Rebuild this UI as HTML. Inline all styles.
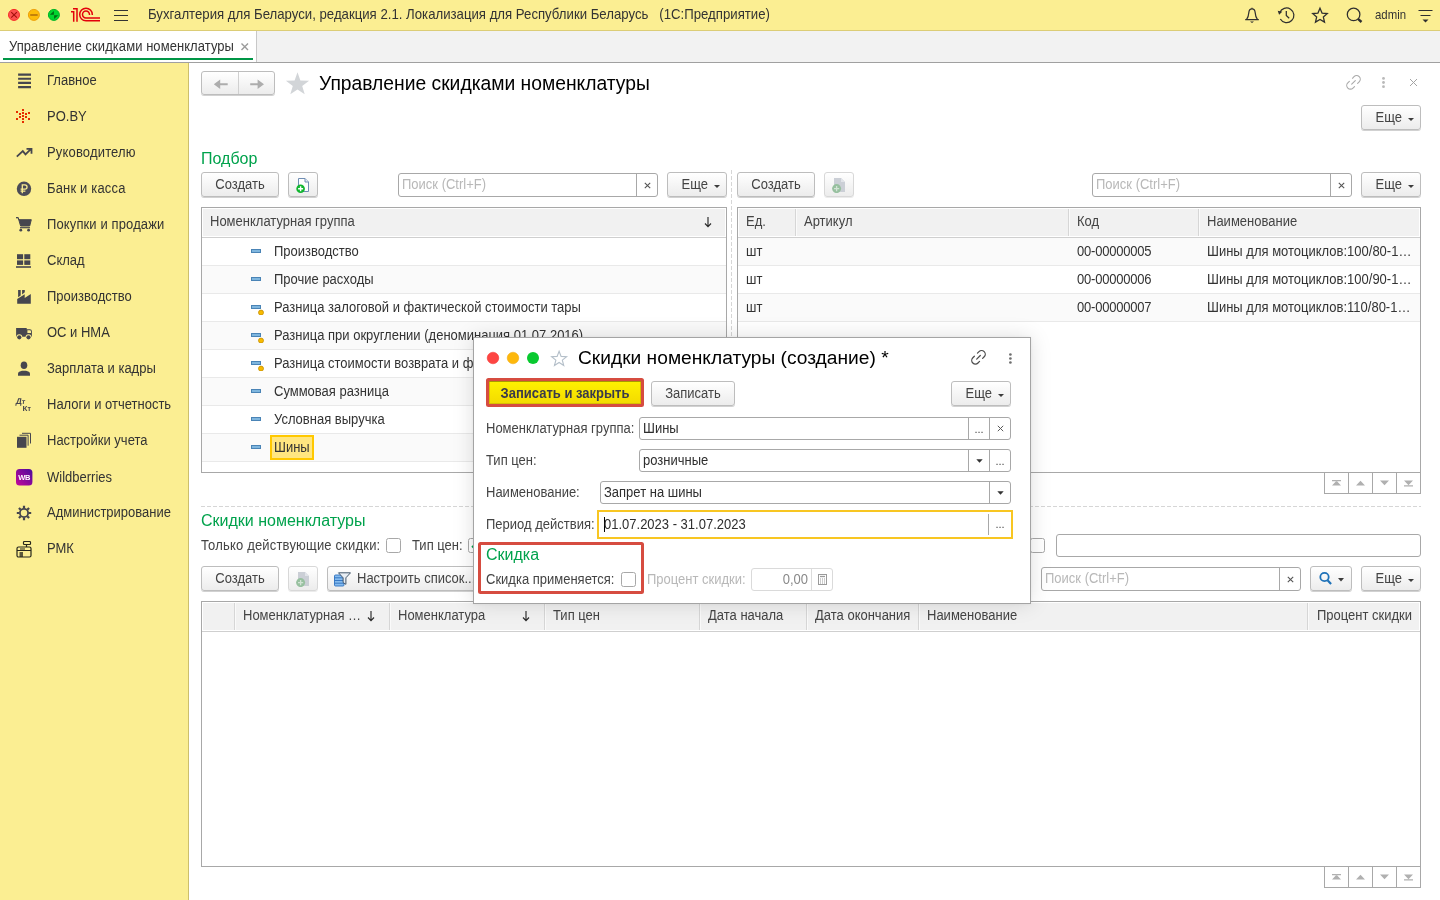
<!DOCTYPE html>
<html lang="ru">
<head>
<meta charset="utf-8">
<title>1C</title>
<style>
*{box-sizing:border-box;margin:0;padding:0}
html,body{width:1440px;height:900px;overflow:hidden;background:#fff}
body{font-family:"Liberation Sans",sans-serif;font-size:13px;color:#333;position:relative;will-change:transform}
.abs{position:absolute}
#topbar{left:0;top:0;width:1440px;height:31px;background:#fbee92;border-bottom:1px solid #dccd76}
#tabbar{left:0;top:31px;width:1440px;height:32px;background:#f2f2f2;border-bottom:1px solid #a0a0a0}
#tab{left:0;top:31px;width:257px;height:31px;background:#fff;border-right:1px solid #c8c8c8}
#tabline{left:3px;top:58px;width:250px;height:2px;background:#009646}
#side{left:0;top:63px;width:189px;height:837px;background:#fbee92;border-right:1px solid #cdbf6c}
.t{position:absolute;white-space:nowrap;line-height:16px}
.nav{margin-top:1px;position:absolute;left:47px;font-size:14px;color:#333;white-space:nowrap;line-height:16px}
.btn{position:absolute;height:26px;border:1px solid #bdbdbd;border-radius:3px;background:linear-gradient(#ffffff,#ececec);box-shadow:0 1px 0 rgba(0,0,0,.18);font-size:14px;color:#444;text-align:center;line-height:23px;white-space:nowrap}
.inp{position:absolute;height:24px;border:1px solid #a8a8a8;border-radius:3px;background:#fff}
.ph{color:#b8b8b8;font-size:14px;position:absolute;left:3px;top:3px;line-height:16px}
.grn{color:#00a24c;font-size:16px}
.tbl{position:absolute;border:1px solid #a8a8a8;background:#fff}
.th{position:absolute;top:0;height:30px;background:#f1f1f1;border-bottom:1px solid #cfcfcf;box-shadow:inset 1px 1px 0 #fff,inset -1px -1px 0 #fff}
.row{position:absolute;left:0;right:0;height:28px;border-bottom:1px solid #e9e9e9}
.row.alt{background:#fafafa}
.c{position:absolute;font-size:14px;line-height:16px;white-space:nowrap;color:#333}

.btn{height:25px}
.btn .car{display:inline-block;width:0;height:0;border-left:3.500px solid transparent;border-right:3.500px solid transparent;border-top:4px solid #444;margin-left:6px;vertical-align:middle;position:relative;top:0px}
.sb{position:absolute;top:0;bottom:0;border-left:1px solid #a8a8a8}
.hd{position:absolute;top:1px;height:27px;border-left:1px solid #d6d6d6;box-shadow:inset 1px 0 0 #fafafa}
.hd span{position:absolute;left:8px;top:5px;font-size:13px;line-height:16px;color:#444;white-space:nowrap}
.scr{position:absolute;width:97px;height:21px;border:1px solid #a8a8a8;border-top:none;background:#fff}
.lbl{margin-top:1px;position:absolute;font-size:13px;line-height:16px;color:#444;white-space:nowrap}
.chk{position:absolute;width:15px;height:15px;border:1px solid #a8a8a8;border-radius:2.500px;background:#fff}

#dlg{position:absolute;left:473px;top:337px;width:558px;height:267px;background:#fff;border:1px solid #a4a4a4;box-shadow:0 0 20px rgba(0,0,0,.13),0 0 3px rgba(0,0,0,.06)}
#dlg .inp{height:23px}
#dlg .val{position:absolute;left:3px;top:3px;font-size:13px;line-height:16px;color:#2e2e2e;white-space:nowrap}
.dots{position:absolute;left:0;right:0;top:3px;text-align:center;font-size:11px;line-height:16px;color:#444;letter-spacing:0}
.more{width:60px;font-size:13px}
.more span{position:absolute;left:13.500px;top:0}
.more i{position:absolute;left:46px;top:12px;width:0;height:0;border-left:3px solid transparent;border-right:3px solid transparent;border-top:3.500px solid #3c3c3c}
.lbl,.c,.hd span,.nav,.val,.ph,.s,.more span{transform:scaleY(1.075)}
.s{display:inline-block}
</style>
</head>
<body>
<div id="topbar" class="abs"></div>
<div id="tabbar" class="abs"></div>
<div id="tab" class="abs"></div>
<div id="tabline" class="abs"></div>
<div id="side" class="abs"></div>

<!-- traffic lights -->
<svg class="abs" style="left:0;top:0" width="140" height="31" viewBox="0 0 140 31">
 <circle cx="14" cy="14.900" r="5.500" fill="#fc514f" stroke="#f62a27" stroke-width="1"/>
 <path d="M11.200 12.100l5.700 5.600M16.900 12.100l-5.700 5.600" stroke="#a30f0d" stroke-width="1.150" fill="none"/>
 <circle cx="33.900" cy="14.900" r="5.500" fill="#fdbc09" stroke="#eea00a" stroke-width="1"/>
 <path d="M30.200 15h7.500" stroke="#b4720a" stroke-width="1.600" fill="none"/>
 <circle cx="53.900" cy="14.900" r="5.500" fill="#00d52f" stroke="#00b426" stroke-width="1"/>
 <path d="M49.800 14.700l4.100-3.800v3.800zM54.100 15.200h4.100l-4.100 3.800z" fill="#006c12"/>
 <!-- 1C logo -->
 <g fill="none" stroke="#e3000b" stroke-width="1.5">
  <path d="M71 11.8h2.700v10M73 8.700h4v13.100"/>
  <path d="M100 20.800H86a6.300 6.300 0 1 1 6.300-6.300v.6"/>
  <path d="M100 18H86a3.500 3.500 0 1 1 3.500-3.500v.5"/>
 </g>
 <!-- hamburger -->
 <path d="M114 10.5h14M114 15.5h14M114 20.5h14" stroke="#333" stroke-width="1.2"/>
</svg>
<div class="t s" style="left:148px;top:7px;font-size:13.2px;color:#333">Бухгалтерия для Беларуси, редакция 2.1. Локализация для Республики Беларусь &nbsp;&nbsp;(1С:Предприятие)</div>
<!-- right icons -->
<svg class="abs" style="left:1236px;top:0" width="204" height="31" viewBox="0 0 204 31" fill="none" stroke="#2f2f2f" stroke-width="1.250">
 <path d="M9.200 19.600h13.600M10.600 19.400c1.800-2 2-4 2.200-6.600.2-2.300 1.300-3.900 3.200-3.900s3 1.600 3.200 3.900c.2 2.600.4 4.600 2.200 6.600M16 8.900v-1.100"/>
 <path d="M14 21.400h4l-2 1.700z" fill="#2f2f2f" stroke="none"/>
 <path d="M43.700 12.900A7.300 7.300 0 1 1 44.300 19"/>
 <path d="M41.700 10.800l4.600.9-3.200 3.100z" fill="#2f2f2f" stroke="none"/>
 <path d="M50.300 10.900v4.600l2.900 2.700"/>
 <path d="M84.00 8.20L86.06 13.07L91.32 13.52L87.33 16.98L88.53 22.13L84.00 19.40L79.47 22.13L80.67 16.98L76.68 13.52L81.94 13.07z" stroke-linejoin="miter"/>
 <circle cx="117.600" cy="14.400" r="6.300"/>
 <path d="M122 18.900l3.500 3.100" stroke-width="2.400"/>
 <path d="M182.500 10.500h14M184.500 15.500h10" stroke-width="1.200"/>
 <path d="M186.500 19.500h6l-3 3z" fill="#2f2f2f" stroke="none"/>
</svg>
<div class="t s" style="left:1375px;top:7px;font-size:11.400px;color:#333">admin</div>
<!-- tab -->
<div class="t s" style="left:9px;top:39px;font-size:13px;color:#333;letter-spacing:.06px">Управление скидками номенклатуры</div>
<svg class="abs" style="left:240px;top:42px" width="10" height="10" viewBox="0 0 10 10"><path d="M1.500 1.500l6.500 6.500M8 1.500l-6.500 6.500" stroke="#9a9a9a" stroke-width="1.400" fill="none"/></svg>

<svg class="abs" style="left:15px;top:71px" width="18" height="18" viewBox="0 0 18 18"><path d="M3.100 3.600h12.900M3.100 7.800h12.900M3.100 11.900h12.900M3.100 16.100h12.900" stroke="#46464e" stroke-width="2.100"/></svg>
<div class="nav" style="top:72px;font-size:13px">Главное</div>
<svg class="abs" style="left:15px;top:107px" width="18" height="18" viewBox="0 0 18 18"><g fill="#e62c00"><rect x="7" y="2" width="2" height="2"/><rect x="7" y="5" width="2" height="2"/><rect x="7" y="8" width="2" height="2"/><rect x="7" y="11" width="2" height="2"/><rect x="7" y="14" width="2" height="2"/><rect x="4" y="6" width="2" height="2"/><rect x="4" y="9" width="2" height="2"/><rect x="10" y="6" width="2" height="2"/><rect x="10" y="9" width="2" height="2"/><rect x="1" y="4" width="2" height="2"/><rect x="1" y="11" width="2" height="2"/><rect x="13" y="5" width="2" height="2"/><rect x="13" y="11" width="2" height="2"/></g></svg>
<div class="nav" style="top:108px;font-size:13px">PO.BY</div>
<svg class="abs" style="left:15px;top:143px" width="18" height="18" viewBox="0 0 18 18"><path d="M1.800 13.600l6-5.500 2.700 3.300 5.300-5.300M11.500 5.800h5v5" fill="none" stroke="#46464e" stroke-width="1.800"/></svg>
<div class="nav" style="top:144px;font-size:13px;letter-spacing:0.17px">Руководителю</div>
<svg class="abs" style="left:15px;top:179px" width="18" height="18" viewBox="0 0 18 18"><circle cx="9" cy="9.800" r="7.200" fill="#4b4b56"/><path d="M7.300 14.300V5.800h2.600a2.100 2.100 0 0 1 0 4.300H5.600M5.600 12.200h4.800" fill="none" stroke="#fbee92" stroke-width="1.300"/></svg>
<div class="nav" style="top:180px;font-size:13px;letter-spacing:0.17px">Банк и касса</div>
<svg class="abs" style="left:15px;top:215px" width="18" height="18" viewBox="0 0 18 18"><path d="M1 2.700h2.200l.7 2h12.400l-1.600 6.300H5.600L3.200 2.700z" fill="#46464e" stroke="#46464e" stroke-width="1" stroke-linejoin="round"/><path d="M5 12.700h10" stroke="#46464e" stroke-width="1.200"/><circle cx="5.800" cy="15.200" r="1.400" fill="#46464e"/><circle cx="13.600" cy="15.200" r="1.400" fill="#46464e"/></svg>
<div class="nav" style="top:216px;font-size:13px;letter-spacing:0.12px">Покупки и продажи</div>
<svg class="abs" style="left:15px;top:251px" width="18" height="18" viewBox="0 0 18 18"><g fill="#46464e"><rect x="2" y="3.200" width="6.100" height="5"/><rect x="9.300" y="3.200" width="6" height="5"/><rect x="2" y="9.400" width="6.100" height="4.500"/><rect x="9.300" y="9.400" width="6" height="4.500"/><rect x="1" y="15.200" width="15" height="1.600"/></g></svg>
<div class="nav" style="top:252px;font-size:13px">Склад</div>
<svg class="abs" style="left:15px;top:287px" width="18" height="18" viewBox="0 0 18 18"><path d="M2.200 16.800V12L9.700 7.300V11L15.800 7V16.800z" fill="#46464e"/><path d="M3.100 3.100H5.700V8.500L3.100 10.200zM7.100 3.100H9.800V5.300L7.100 7.500z" fill="#46464e"/></svg>
<div class="nav" style="top:288px;font-size:13px">Производство</div>
<svg class="abs" style="left:15px;top:323px" width="18" height="18" viewBox="0 0 18 18"><path d="M1.100 5.100h10.600v8.600H1.100zM11.700 6.300h3.200a2 2 0 0 1 2 2v5.400h-5.200z" fill="#46464e"/><path d="M12.400 7.300h2.400a1.200 1.200 0 0 1 1.200 1.200V10h-3.600z" fill="#fbee92"/><circle cx="4.300" cy="14.300" r="3" fill="#fbee92"/><circle cx="13.500" cy="14.300" r="3" fill="#fbee92"/><circle cx="4.300" cy="14.300" r="2.100" fill="#46464e"/><circle cx="13.500" cy="14.300" r="2.100" fill="#46464e"/></svg>
<div class="nav" style="top:324px;font-size:13px">ОС и НМА</div>
<svg class="abs" style="left:15px;top:359px" width="18" height="18" viewBox="0 0 18 18"><ellipse cx="9" cy="6.300" rx="3.300" ry="3.800" fill="#46464e"/><path d="M3 16.700v-2.200c0-1.500 2-2.300 4-2.700h4c2 .4 4 1.200 4 2.700v2.200z" fill="#46464e"/></svg>
<div class="nav" style="top:360px;font-size:13px">Зарплата и кадры</div>
<svg class="abs" style="left:15px;top:395px" width="18" height="18" viewBox="0 0 18 18"><text x="1.800" y="8.800" font-family="Liberation Sans" font-weight="bold" font-size="8.500" fill="#46464e" transform="skewX(-8)" >Д<tspan font-size="7">т</tspan></text><text x="7.600" y="16.200" font-family="Liberation Sans" font-weight="bold" font-size="8" fill="#46464e">К<tspan font-size="7">т</tspan></text></svg>
<div class="nav" style="top:396px;font-size:13px">Налоги и отчетность</div>
<svg class="abs" style="left:15px;top:431px" width="18" height="18" viewBox="0 0 18 18"><rect x="2" y="5.800" width="9.500" height="11" fill="#46464e"/><path d="M4.500 4.200h8.600v10.500M7 2.300h8.500v10.200" fill="none" stroke="#46464e" stroke-width="1"/></svg>
<div class="nav" style="top:432px;font-size:13px">Настройки учета</div>
<svg class="abs" style="left:15px;top:468px" width="18" height="18" viewBox="0 0 18 18"><defs><linearGradient id="wb" x1="0" y1="1" x2="1" y2="0"><stop offset="0" stop-color="#c4089a"/><stop offset="1" stop-color="#4b0a9c"/></linearGradient></defs><rect x="1" y="1" width="16.400" height="16.400" rx="3.500" fill="url(#wb)"/><text x="9.200" y="12" text-anchor="middle" font-family="Liberation Sans" font-weight="bold" font-size="7.500" fill="#fff" letter-spacing="-0.3">WB</text></svg>
<div class="nav" style="top:469px;font-size:13px">Wildberries</div>
<svg class="abs" style="left:15px;top:504px" width="18" height="18" viewBox="0 0 18 18"><circle cx="9" cy="9" r="4.100" fill="none" stroke="#46464e" stroke-width="1.800"/><path d="M13.60 9.00L16.20 9.00M12.25 12.25L14.09 14.09M9.00 13.60L9.00 16.20M5.75 12.25L3.91 14.09M4.40 9.00L1.80 9.00M5.75 5.75L3.91 3.91M9.00 4.40L9.00 1.80M12.25 5.75L14.09 3.91" stroke="#46464e" stroke-width="2.200"/></svg>
<div class="nav" style="top:504px;font-size:13px">Администрирование</div>
<svg class="abs" style="left:15px;top:540px" width="18" height="18" viewBox="0 0 18 18"><g fill="none" stroke="#26261c" stroke-width="1.200" stroke-linejoin="round"><rect x="2" y="7" width="14" height="10" rx="1.500"/><rect x="8.500" y="1.500" width="7" height="3" rx=".8"/><path d="M11.500 4.500v2.500M2 10.500h14M5 9h5"/></g><path d="M4.500 12h3.500v5h-3.500z" fill="#26261c" opacity=".75"/></svg>
<div class="nav" style="top:540px;font-size:13px">РМК</div>
<div class="btn" style="left:201px;top:71px;width:74px;height:24px"><svg width="74" height="24" viewBox="0 0 74 24" style="position:absolute;left:-1px;top:-1px"><path d="M37.500 1v22" stroke="#d0d0d0"/><g stroke="#adadad" stroke-width="2" fill="none"><path d="M18 13.200h8.700M49.200 13.200h8"/></g><path d="M12.800 13.200l6.400-4.700v9.400zM63 13.200l-6.400-4.700v9.400z" fill="#adadad"/></svg></div>
<svg class="abs" style="left:285px;top:71px" width="25" height="25" viewBox="0 0 25 25"><path d="M12.500 1.300l2.900 8.200 8.700.2-6.900 5.300 2.500 8.300-7.200-4.900-7.200 4.900 2.500-8.300L.9 9.700l8.700-.2z" fill="#d2d5d8"/></svg>
<div class="t" style="left:319px;top:72px;font-size:19.300px;line-height:24px;color:#000">Управление скидками номенклатуры</div>
<svg class="abs" style="left:1340px;top:70px" width="90" height="26" viewBox="0 0 90 26"><g transform="translate(13.5 12.4) rotate(-45) scale(0.73) translate(-12 -12)" fill="none" stroke="#aaaaaa" stroke-width="1.51" stroke-linecap="round"><path d="M15 7h3a5 5 0 0 1 0 10h-3m-6 0H6a5 5 0 0 1 0-10h3M8.500 12h7"/></g><g fill="#b9b9b9"><circle cx="43.500" cy="8.400" r="1.400"/><circle cx="43.500" cy="12.500" r="1.400"/><circle cx="43.500" cy="16.700" r="1.400"/></g><path d="M70 9l7 7M77 9l-7 7" stroke="#a4a4a4" stroke-width="1"/></svg>
<div class="btn more" style="left:1361px;top:105px"><span>Еще</span><i></i></div>
<div class="t grn" style="left:201px;top:149px;line-height:20px">Подбор</div>
<div class="btn" style="left:201px;top:172px;width:78px;font-size:13px"><span class="s">Создать</span></div>
<div class="btn" style="left:288px;top:172px;width:30px"><svg width="16" height="16" viewBox="0 0 16 16" style="position:absolute;left:6px;top:4px"><path d="M3.500 1.500h6.500l3.500 3.500v9.500h-10z" fill="#fdfdfe" stroke="#6f8db3" stroke-width="1"/><path d="M10 1.500v3.500h3.500" fill="#e4ebf3" stroke="#6f8db3" stroke-width="1"/><circle cx="5.600" cy="11.700" r="4.300" fill="#0fb52e"/><path d="M5.600 9.200v5M3.100 11.700h5" stroke="#fff" stroke-width="1.400"/></svg></div>
<div class="inp" style="left:398px;top:173px;width:260px"><div class="ph" style="font-size:13px">Поиск (Ctrl+F)</div><div class="sb" style="right:0;width:21px"><svg width="9" height="9" viewBox="0 0 9 9" style="position:absolute;left:5.500px;top:7px"><path d="M1.800 1.800l5.400 5.400M7.200 1.800l-5.400 5.400" stroke="#555" stroke-width="1.100" fill="none"/></svg></div></div>
<div class="btn more" style="left:667px;top:172px"><span>Еще</span><i></i></div>
<div class="abs" style="left:731px;top:170px;width:1px;height:325px;background:repeating-linear-gradient(180deg,#d6d6d6 0 4px,transparent 4px 6px)"></div>
<div class="btn" style="left:737px;top:172px;width:78px;font-size:13px"><span class="s">Создать</span></div>
<div class="btn" style="left:824px;top:172px;width:30px;border-color:#d8d8d8;box-shadow:0 1px 0 rgba(0,0,0,.08)"><svg width="16" height="16" viewBox="0 0 16 16" style="position:absolute;left:6px;top:4px"><path d="M3 1h7l4 4v10h-11z" fill="#cbcfd6"/><path d="M10 1v4h4z" fill="#e1e4e9"/><circle cx="5.600" cy="11.600" r="4.500" fill="#97c09f"/><path d="M5.600 9v5.200M3 11.600h5.200" stroke="#d2e3d5" stroke-width="1.300"/></svg></div>
<div class="inp" style="left:1092px;top:173px;width:260px"><div class="ph" style="font-size:13px">Поиск (Ctrl+F)</div><div class="sb" style="right:0;width:21px"><svg width="9" height="9" viewBox="0 0 9 9" style="position:absolute;left:5.500px;top:7px"><path d="M1.800 1.800l5.400 5.400M7.200 1.800l-5.400 5.400" stroke="#555" stroke-width="1.100" fill="none"/></svg></div></div>
<div class="btn more" style="left:1361px;top:172px"><span>Еще</span><i></i></div>
<div class="tbl" style="left:201px;top:207px;width:526px;height:266px;overflow:hidden"><div class="th" style="left:0;right:0"><span class="c" style="left:8px;top:6px;font-size:13px;color:#444">Номенклатурная группа</span><svg width="8" height="11" viewBox="0 0 8 11" style="position:absolute;left:502px;top:9px"><path d="M4 0v9.500M1 6.500l3 3.200 3-3.200" fill="none" stroke="#2a2a2a" stroke-width="1.150"/></svg></div><div class="row" style="top:30px"><svg width="14" height="12" viewBox="0 0 14 12" style="position:absolute;left:48px;top:9px"><rect x="1.500" y="2.500" width="9" height="3" fill="#7fb6de" stroke="#4a84b6" stroke-width="1"/></svg><span class="c" style="left:72px;top:6px;font-size:13px">Производство</span></div><div class="row alt" style="top:58px"><svg width="14" height="12" viewBox="0 0 14 12" style="position:absolute;left:48px;top:9px"><rect x="1.500" y="2.500" width="9" height="3" fill="#7fb6de" stroke="#4a84b6" stroke-width="1"/></svg><span class="c" style="left:72px;top:6px;font-size:13px">Прочие расходы</span></div><div class="row" style="top:86px"><svg width="14" height="12" viewBox="0 0 14 12" style="position:absolute;left:48px;top:9px"><rect x="1.500" y="2.500" width="9" height="3" fill="#7fb6de" stroke="#4a84b6" stroke-width="1"/><circle cx="11" cy="9.600" r="2.500" fill="#f7ba00" stroke="#c48d00" stroke-width=".8"/></svg><span class="c" style="left:72px;top:6px;font-size:13px">Разница залоговой и фактической стоимости тары</span></div><div class="row alt" style="top:114px"><svg width="14" height="12" viewBox="0 0 14 12" style="position:absolute;left:48px;top:9px"><rect x="1.500" y="2.500" width="9" height="3" fill="#7fb6de" stroke="#4a84b6" stroke-width="1"/><circle cx="11" cy="9.600" r="2.500" fill="#f7ba00" stroke="#c48d00" stroke-width=".8"/></svg><span class="c" style="left:72px;top:6px;font-size:13px">Разница при округлении (деноминация 01.07.2016)</span></div><div class="row" style="top:142px"><svg width="14" height="12" viewBox="0 0 14 12" style="position:absolute;left:48px;top:9px"><rect x="1.500" y="2.500" width="9" height="3" fill="#7fb6de" stroke="#4a84b6" stroke-width="1"/><circle cx="11" cy="9.600" r="2.500" fill="#f7ba00" stroke="#c48d00" stroke-width=".8"/></svg><span class="c" style="left:72px;top:6px;font-size:13px">Разница стоимости возврата и фактической стоимости товаров</span></div><div class="row alt" style="top:170px"><svg width="14" height="12" viewBox="0 0 14 12" style="position:absolute;left:48px;top:9px"><rect x="1.500" y="2.500" width="9" height="3" fill="#7fb6de" stroke="#4a84b6" stroke-width="1"/></svg><span class="c" style="left:72px;top:6px;font-size:13px">Суммовая разница</span></div><div class="row" style="top:198px"><svg width="14" height="12" viewBox="0 0 14 12" style="position:absolute;left:48px;top:9px"><rect x="1.500" y="2.500" width="9" height="3" fill="#7fb6de" stroke="#4a84b6" stroke-width="1"/></svg><span class="c" style="left:72px;top:6px;font-size:13px">Условная выручка</span></div><div class="row alt" style="top:226px"><div style="position:absolute;left:68px;top:1px;width:44px;height:25px;background:#ffe680;border:2px solid #ffc800"></div><svg width="14" height="12" viewBox="0 0 14 12" style="position:absolute;left:48px;top:9px"><rect x="1.500" y="2.500" width="9" height="3" fill="#7fb6de" stroke="#4a84b6" stroke-width="1"/></svg><span class="c" style="left:72px;top:6px;font-size:13px">Шины</span></div></div>
<div class="tbl" style="left:737px;top:207px;width:684px;height:266px;overflow:hidden"><div class="th" style="left:0;right:0"><div class="hd" style="left:0px;width:57px;border-left:none;box-shadow:none;"><span>Ед.</span></div><div class="hd" style="left:57px;width:273px;"><span>Артикул</span></div><div class="hd" style="left:330px;width:130px;"><span>Код</span></div><div class="hd" style="left:460px;width:224px;"><span>Наименование</span></div></div><div class="row alt" style="top:30px"><span class="c" style="left:8px;top:6px;font-size:13px">шт</span><span class="c" style="left:339px;top:6px;font-size:13px;letter-spacing:-.22px">00-00000005</span><span class="c" style="left:469px;top:6px;font-size:13px">Шины для мотоциклов:100/80-1…</span></div><div class="row" style="top:58px"><span class="c" style="left:8px;top:6px;font-size:13px">шт</span><span class="c" style="left:339px;top:6px;font-size:13px;letter-spacing:-.22px">00-00000006</span><span class="c" style="left:469px;top:6px;font-size:13px">Шины для мотоциклов:100/90-1…</span></div><div class="row alt" style="top:86px"><span class="c" style="left:8px;top:6px;font-size:13px">шт</span><span class="c" style="left:339px;top:6px;font-size:13px;letter-spacing:-.22px">00-00000007</span><span class="c" style="left:469px;top:6px;font-size:13px">Шины для мотоциклов:110/80-1…</span></div></div>
<div class="scr" style="left:1324px;top:473px"><svg width="97" height="21" viewBox="0 0 97 21" style="position:absolute;left:-1px;top:-1px"><path d="M24.500 0v21M48.500 0v21M72.500 0v21" stroke="#a8a8a8" stroke-width="1"/><g fill="#b0b0b0"><path d="M8 8h9v1.200H8zM8 13.500h9L12.500 8.800z"/><path d="M32 13.500h9L36.500 8.800z"/><path d="M56 8.500h9L60.500 13.200z"/><path d="M80 8.500h9L84.500 13.200zM80 13.300h9v1.200H80z"/></g></svg></div>
<div class="abs" style="left:201px;top:506px;width:1220px;height:1px;background:repeating-linear-gradient(90deg,#d6d6d6 0 4px,transparent 4px 6px)"></div>
<div class="t grn" style="left:201px;top:511px;line-height:20px">Скидки номенклатуры</div>
<div class="lbl" style="left:201px;top:537px;letter-spacing:.18px">Только действующие скидки:</div>
<div class="chk" style="left:386px;top:538px"></div>
<div class="lbl" style="left:412px;top:537px">Тип цен:</div>
<div class="chk" style="left:468px;top:538px"><svg width="10" height="10" viewBox="0 0 10 10" style="position:absolute;left:1.500px;top:2px"><path d="M1 5l3 3 5-6.500" fill="none" stroke="#00a24c" stroke-width="1.800"/></svg></div>
<div class="chk" style="left:1030px;top:538px"></div>
<div class="inp" style="left:1056px;top:534px;width:365px;height:23px"></div>
<div class="btn" style="left:201px;top:566px;width:78px;font-size:13px"><span class="s">Создать</span></div>
<div class="btn" style="left:288px;top:566px;width:30px;border-color:#d8d8d8;box-shadow:0 1px 0 rgba(0,0,0,.08)"><svg width="16" height="16" viewBox="0 0 16 16" style="position:absolute;left:6px;top:4px"><path d="M3 1h7l4 4v10h-11z" fill="#cbcfd6"/><path d="M10 1v4h4z" fill="#e1e4e9"/><circle cx="5.600" cy="11.600" r="4.500" fill="#97c09f"/><path d="M5.600 9v5.200M3 11.600h5.200" stroke="#d2e3d5" stroke-width="1.300"/></svg></div>
<div class="btn" style="left:327px;top:566px;width:170px;font-size:13px;text-align:left;padding-left:29px"><svg width="17" height="15" viewBox="0 0 17 15" style="position:absolute;left:6px;top:5px"><rect x=".5" y="3" width="9.500" height="11" rx="1" fill="#86bbee" stroke="#2e72bf" stroke-width=".9"/><path d="M.5 5.800h9.500M.5 8.500h9.500M.5 11.200h9.500" stroke="#2e72bf" stroke-width=".9"/><path d="M4.500 .8h12l-4.600 5v6.500l-2.800-1.800V5.800z" fill="#e8eef4" stroke="#44586c" stroke-width="1" stroke-linejoin="round"/></svg><span class="s">Настроить список...</span></div>
<div class="inp" style="left:1041px;top:567px;width:260px"><div class="ph" style="font-size:13px">Поиск (Ctrl+F)</div><div class="sb" style="right:0;width:21px"><svg width="9" height="9" viewBox="0 0 9 9" style="position:absolute;left:5.500px;top:7px"><path d="M1.800 1.800l5.400 5.400M7.200 1.800l-5.400 5.400" stroke="#555" stroke-width="1.100" fill="none"/></svg></div></div>
<div class="btn" style="left:1310px;top:566px;width:42px"><svg width="40" height="23" viewBox="0 0 40 23" style="position:absolute;left:0;top:0"><circle cx="13.500" cy="10" r="4.200" fill="none" stroke="#1f72b8" stroke-width="1.800"/><path d="M16.500 13.200l3.600 3.800" stroke="#1f72b8" stroke-width="2.200"/><path d="M27 11h6l-3 3.500z" fill="#3c3c3c"/></svg></div>
<div class="btn more" style="left:1361px;top:566px"><span>Еще</span><i></i></div>
<div class="tbl" style="left:201px;top:601px;width:1220px;height:266px;overflow:hidden"><div class="th" style="left:0;right:0"><div class="hd" style="left:0px;width:32px;border-left:none;box-shadow:none;"><span></span></div><div class="hd" style="left:32px;width:155px;"><span>Номенклатурная …</span><svg width="8" height="11" viewBox="0 0 8 11" style="position:absolute;right:14px;top:8px"><path d="M4 0v9.500M1 6.500l3 3.200 3-3.200" fill="none" stroke="#2a2a2a" stroke-width="1.150"/></svg></div><div class="hd" style="left:187px;width:155px;"><span>Номенклатура</span><svg width="8" height="11" viewBox="0 0 8 11" style="position:absolute;right:14px;top:8px"><path d="M4 0v9.500M1 6.500l3 3.200 3-3.200" fill="none" stroke="#2a2a2a" stroke-width="1.150"/></svg></div><div class="hd" style="left:342px;width:155px;"><span>Тип цен</span></div><div class="hd" style="left:497px;width:107px;"><span>Дата начала</span></div><div class="hd" style="left:604px;width:112px;"><span>Дата окончания</span></div><div class="hd" style="left:716px;width:389px;"><span>Наименование</span></div><div class="hd" style="left:1105px;width:114px;"><span style="left:auto;right:9px">Процент скидки</span></div></div></div>
<div class="scr" style="left:1324px;top:867px"><svg width="97" height="21" viewBox="0 0 97 21" style="position:absolute;left:-1px;top:-1px"><path d="M24.500 0v21M48.500 0v21M72.500 0v21" stroke="#a8a8a8" stroke-width="1"/><g fill="#b0b0b0"><path d="M8 8h9v1.200H8zM8 13.500h9L12.500 8.800z"/><path d="M32 13.500h9L36.500 8.800z"/><path d="M56 8.500h9L60.500 13.200z"/><path d="M80 8.500h9L84.500 13.200zM80 13.300h9v1.200H80z"/></g></svg></div>
<div id="dlg"><div style="position:absolute;left:1px;top:1px">
<svg style="position:absolute;left:9px;top:9px" width="90" height="20" viewBox="0 0 90 20"><circle cx="9" cy="10" r="5.800" fill="#fd4542" stroke="#f52b28" stroke-width=".5"/><circle cx="29" cy="10" r="5.800" fill="#fdb80c" stroke="#f2a70a" stroke-width=".5"/><circle cx="49" cy="10" r="6" fill="#08c92f"/><path d="M75.10 3.20L77.10 8.35L82.61 8.66L78.33 12.15L79.74 17.49L75.10 14.50L70.46 17.49L71.87 12.15L67.59 8.66L73.10 8.35z" fill="#fff" stroke="#b4bfc9" stroke-width="1.100" stroke-linejoin="miter"/></svg>
<div class="t" style="left:103px;top:7px;font-size:19.200px;line-height:24px;color:#000">Скидки номенклатуры (создание) *</div>
<svg style="position:absolute;left:494px;top:9px" width="50" height="20" viewBox="0 0 50 20"><g transform="translate(9.5 9.3) rotate(-45) scale(0.73) translate(-12 -12)" fill="none" stroke="#4c4c4c" stroke-width="1.71" stroke-linecap="round"><path d="M15 7h3a5 5 0 0 1 0 10h-3m-6 0H6a5 5 0 0 1 0-10h3M8.500 12h7"/></g><g fill="#6e6e6e"><circle cx="41.400" cy="6.500" r="1.350"/><circle cx="41.400" cy="10.500" r="1.350"/><circle cx="41.400" cy="14.500" r="1.350"/></g></svg>
<div style="position:absolute;left:11px;top:39px;width:158px;height:29px;border:3px solid #d64c40;border-radius:2.500px;background:linear-gradient(#fff200,#f3da00);box-shadow:inset 0 1px 0 #a89a00,inset 0 0 0 1px #d8bf00;font-size:13px;font-weight:bold;color:#3a3a4a;text-align:center;line-height:25px"><span class="s">Записать и закрыть</span></div>
<div class="btn" style="left:176px;top:42px;width:84px;font-size:13px"><span class="s">Записать</span></div>
<div class="btn more" style="left:476px;top:42px"><span>Еще</span><i></i></div>
<div class="lbl" style="left:11px;top:81px">Номенклатурная группа:</div>
<div class="inp" style="left:164px;top:78px;width:372px"><div class="val">Шины</div><div class="sb" style="right:21px;width:21px"><div class="dots">...</div></div><div class="sb" style="right:0;width:21px"><svg width="9" height="9" viewBox="0 0 9 9" style="position:absolute;left:5.500px;top:6px"><path d="M1.800 1.800l5.400 5.400M7.200 1.800l-5.400 5.400" stroke="#5a5a5a" stroke-width="1" fill="none"/></svg></div></div>
<div class="lbl" style="left:11px;top:113px">Тип цен:</div>
<div class="inp" style="left:164px;top:110px;width:372px"><div class="val">розничные</div><div class="sb" style="right:21px;width:21px"><svg width="9" height="6" viewBox="0 0 9 6" style="position:absolute;left:6px;top:8px"><path d="M1.300 1.200h6.400L4.500 4.800z" fill="#333"/></svg></div><div class="sb" style="right:0;width:21px"><div class="dots">...</div></div></div>
<div class="lbl" style="left:11px;top:145px">Наименование:</div>
<div class="inp" style="left:125px;top:142px;width:411px"><div class="val">Запрет на шины</div><div class="sb" style="right:0;width:21px"><svg width="9" height="6" viewBox="0 0 9 6" style="position:absolute;left:6px;top:8px"><path d="M1.300 1.200h6.400L4.500 4.800z" fill="#333"/></svg></div></div>
<div class="lbl" style="left:11px;top:177px">Период действия:</div>
<div style="position:absolute;left:122px;top:171px;width:416px;height:29px;border:2px solid #f8c622;background:#fff"><div style="position:absolute;left:5px;top:5px;width:1px;height:15px;background:#000"></div><div class="val" style="left:5px;top:5px">01.07.2023 - 31.07.2023</div><div style="position:absolute;right:22px;top:2px;bottom:2px;border-left:1px solid #a8a8a8"></div><div class="dots" style="left:auto;right:0;width:22px;top:4px">...</div></div>
<div style="position:absolute;left:3px;top:203px;width:166px;height:52px;border:3px solid #d64c40;border-radius:2.500px"></div>
<div class="t grn" style="left:11px;top:206px;line-height:20px">Скидка</div>
<div class="lbl" style="left:11px;top:232px">Скидка применяется:</div>
<div class="chk" style="left:146px;top:233px"></div>
<div class="lbl" style="left:172px;top:232px;color:#b8b8b8">Процент скидки:</div>
<div class="inp" style="left:276px;top:229px;width:82px;border-color:#dadada"><div class="val" style="left:auto;right:24px;color:#8a8a8a">0,00</div><div class="sb" style="right:0;width:21px;border-color:#dcdcdc"><svg width="9" height="11" viewBox="0 0 9 11" style="position:absolute;left:5.500px;top:5px"><rect x=".5" y=".5" width="8" height="10" fill="none" stroke="#9a9a9a"/><path d="M2 2.500h5" stroke="#9a9a9a" stroke-width="1.300"/><path d="M2 5h5M2 7h5M2 9h5" stroke="#9a9a9a" stroke-dasharray="1 1"/></svg></div></div>
</div></div>
</body>
</html>
